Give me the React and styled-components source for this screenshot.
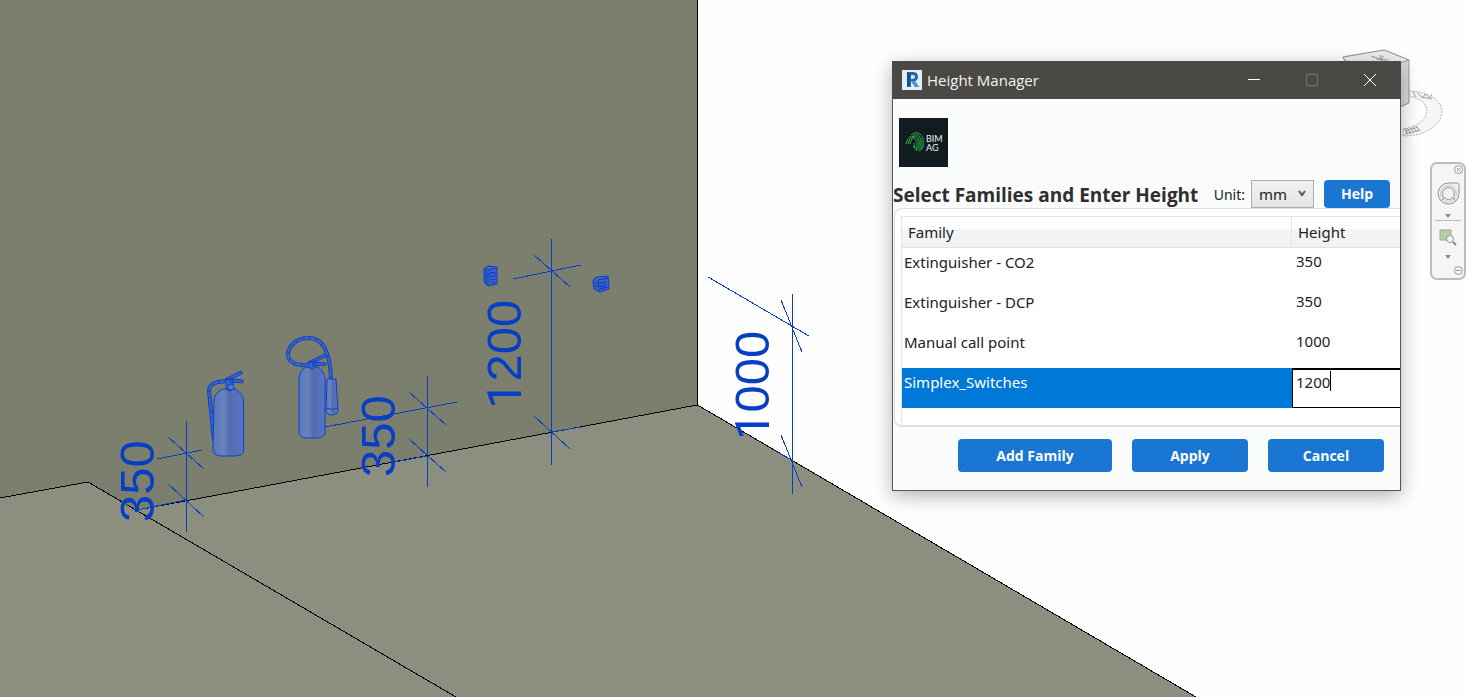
import React from "react";
import styled, { createGlobalStyle, css } from "styled-components";

const GlobalStyle = createGlobalStyle`
  * { box-sizing: border-box; }
  body { margin: 0; background: #fefefe; }
  body, button, input, select { font-family: "Noto Sans", "Open Sans", sans-serif; }
`;

const Workspace = styled.main`
  position: relative;
  min-height: 100vh;
  overflow: hidden;
`;

const Scene = styled.svg`
  position: absolute;
  inset: 0;
  width: 100%;
  height: 100%;
  display: block;
`;

const DimensionText = styled.text`
  font-family: "Liberation Sans", Arial, sans-serif;
  font-size: 49px;
  fill: #053fc4;
`;

const LeadingOne = styled.tspan`
  font-family: Roboto, sans-serif;
`;

const Dialog = styled.section`
  position: absolute;
  top: 61px;
  right: 65px;
  width: 509px;
  display: flex;
  flex-direction: column;
  border: 1px solid #555;
  background: #fafbfb;
  box-shadow: 0 5px 18px rgba(0, 0, 0, 0.3);
`;

const TitleBar = styled.header`
  display: flex;
  align-items: center;
  height: 38px;
  margin: -1px -1px 0;
  padding: 0 2px 0 10px;
  background: #4b4945;
  color: #f3f3f3;
`;

const WindowTitle = styled.h1`
  flex: 1;
  margin: 0 0 0 5px;
  font-family: "Open Sans", sans-serif;
  font-size: 15px;
  line-height: 20px;
  font-weight: 400;
`;

const WindowButton = styled.button`
  width: 58px;
  height: 38px;
  padding: 0;
  border: 0;
  background: transparent;
  color: ${(p) => (p.disabled ? "#75736f" : "#fff")};
  display: grid;
  place-items: center;
`;

const DialogBody = styled.div`
  overflow: hidden;
  padding: 19px 0 18px;
`;

const Brand = styled.svg`
  display: block;
  margin-left: 6px;
`;

const Toolbar = styled.div`
  display: flex;
  align-items: center;
  height: 28px;
  margin-top: 13px;
  padding-right: 10px;
`;

const Heading = styled.h2`
  flex: 1;
  margin: 0;
  font-family: "Open Sans", sans-serif;
  font-size: 19px;
  line-height: 28px;
  padding-top: 1px;
  font-weight: 700;
  white-space: nowrap;
  color: #2e2e2e;
`;

const UnitLabel = styled.label`
  font-size: 14px;
  color: #222;
`;

const UnitPicker = styled.span`
  position: relative;
  margin: 0 10px 0 6px;
  display: flex;
`;

const UnitSelect = styled.select`
  appearance: none;
  width: 63px;
  height: 28px;
  padding: 0 7px;
  border: 1px solid #acacac;
  border-radius: 0;
  background: linear-gradient(#f0f0f0, #e5e5e5);
  font-size: 15px;
  color: #222;
`;

const Chevron = styled.svg`
  position: absolute;
  right: 8px;
  top: 10px;
  pointer-events: none;
`;

const ActionButton = styled.button`
  width: ${(p) => p.$width};
  height: ${(p) => (p.$compact ? "28px" : "33px")};
  padding: 0 0 1px;
  border: 0;
  border-radius: 4px;
  background: #1976d2;
  color: #fff;
  font-family: "Open Sans", sans-serif;
  font-size: 14px;
  font-weight: 700;
`;

const Panel = styled.div`
  height: 219px;
  margin: 0 -12px 0 1px;
  padding: 7px 0 0 6px;
  border: 1px solid #dcdcdc;
  border-bottom: 2px solid #dfdfdf;
  border-radius: 8px;
  background: #fff;
`;

const FamilyTable = styled.table`
  width: 100%;
  height: 209px;
  table-layout: fixed;
  border-collapse: separate;
  border-spacing: 0;
  border: 1px solid #e4e6e8;
  border-width: 1px 0 0 1px;
  font-size: 15px;
  line-height: 20px;
  color: #222;
`;

const HeadCell = styled.th`
  width: ${(p) => p.$width || "auto"};
  height: 31px;
  padding: 0 6px;
  border-right: 1px solid #e4e6e8;
  border-bottom: 1px solid #e0e2e4;
  background: linear-gradient(#fff 40%, #f4f5f6 41%, #f0f1f2);
  text-align: left;
  font-weight: 400;
`;

const Row = styled.tr`
  height: 40px;
  ${(p) =>
    p.$selected &&
    css`
      background: #0078d7;
      color: #fff;
    `}
`;

const Cell = styled.td`
  height: 40px;
  padding: 4px 2px 0;
  vertical-align: top;
  position: relative;
`;

const HeightCell = styled(Cell)`
  padding: ${(p) => (p.$editing ? 0 : "3px 4px 0")};
`;

const HeightInput = styled.input`
  display: block;
  width: 100%;
  height: 40px;
  padding: 0 3px 14px;
  border: 1px solid #000;
  border-top-width: 2px;
  border-radius: 0;
  outline: 0;
  background: #fff;
  color: #222;
  font-size: 15px;
`;

const Caret = styled.span`
  position: absolute;
  left: 38px;
  top: 3px;
  width: 1px;
  height: 20px;
  background: #000;
`;

const Actions = styled.footer`
  display: flex;
  justify-content: flex-end;
  gap: 20px;
  margin-top: 12px;
  padding-right: 16px;
`;

const NavBar = styled.nav`
  position: absolute;
  top: 162px;
  right: 0;
  width: 36px;
  display: flex;
  flex-direction: column;
  align-items: center;
  border: 2px solid #bcbcbc;
  border-radius: 7px;
  background: #f5f5f5;
`;

const NavButton = styled.button`
  width: 100%;
  height: ${(p) => p.$height};
  padding: 0 ${(p) => (p.$corner ? "1px" : "0")} 0 0;
  border: 0;
  background: transparent;
  display: flex;
  align-items: center;
  justify-content: ${(p) => (p.$corner ? "flex-end" : "center")};
`;

const NavRule = styled.hr`
  width: 26px;
  height: 1px;
  margin: 0;
  border: 0;
  background: #bcbcbc;
`;

const families = [
  { name: "Extinguisher - CO2", height: "350" },
  { name: "Extinguisher - DCP", height: "350" },
  { name: "Manual call point", height: "1000" },
  { name: "Simplex_Switches", height: "1200", editing: true },
];

const dimensions = [
  { label: "350", x: 154, y: 522, lines: "M186.5 421V532M157 459L202 450M168 437L204 469M137 510L186 500M168 484L204 517" },
  { label: "350", x: 395, y: 477, lines: "M427.5 376V487M325 427L457 402M409 392L446 425M395 462L427 456M409 439L446 472" },
  { label: "1200", x: 521, y: 409, lines: "M551.5 239V465M513 279L581 265M534 255L570 287M551 432L581 427M534 416L570 449" },
  { label: "1000", x: 769, y: 440, lines: "M792.5 294V494M708 277L809 336M781 300L802 352M777 452L792 460M781 435L802 487" },
];

function Hose({ d }) {
  return (
    <g fill="none">
      <path d={d} stroke="#0a44cc" strokeWidth="4" />
      <path d={d} stroke="#4468b8" strokeWidth="2" />
      <path d={d} stroke="#0a44cc" strokeWidth="2" strokeDasharray="1 6" />
    </g>
  );
}

function Extinguishers() {
  return (
    <g stroke="#0a44cc" strokeWidth="1" strokeLinejoin="round">
      <Hose d="M226 381L218 382Q209 384 209 391L211 411L214 441" />
      <path d="M214 401Q214 393 223 389L235 389Q243 393 243.500 401V451Q243 455 236 456H220Q213 455 213 449Z" fill="url(#tank)" />
      <path d="M226 379L233 378V389L230 391L226 389ZM225 379L241 371L243 373L230 380ZM231 379L243 380V383L230 382Z" fill="#3a62c2" />
      <circle cx="231" cy="387" r="3" fill="#5b7acc" />
      <Hose d="M309 365C296 366 287 362 288 353C290 343 299 338 309 338C322 338 330 350 331 379" />
      <path d="M299 379Q299 371 306 367H318Q324 371 325 379V433Q324 437 318 438H305Q299 437 299 432Z" fill="url(#tank)" />
      <path d="M308 362L315 361V367L312 369L308 367ZM308 362L325 354L327 356L313 363ZM313 362L326 363V365L313 366Z" fill="#3a62c2" />
      <path d="M327 379H336L338 411Q338 414 333 415H330Q327 414 326 411Z" fill="url(#tank)" />
      <path d="M327 408Q332 411 338 408" fill="none" />
    </g>
  );
}

function WallDevices() {
  return (
    <g stroke="#0a3fcb" strokeWidth="1" fill="#3e64bd">
      <path d="M484 269L488 266L497 267V284L488 286L484 282Z" />
      <path d="M488 270L497 268M488 270V285M486 268V284M490 273L495 272V276L490 277ZM490 280L496 279M491 283L496 282M484 274L488 276" fill="none" />
      <path d="M593 280L597 277L608 276L609 289L600 292L594 289Z" />
      <path d="M598 280L608 278M598 280L599 291M600 283L606 282V286L600 287ZM600 289L608 287M594 283H598M594 286H598M603 282V290" fill="none" />
    </g>
  );
}

function ViewCube() {
  return (
    <g fill="none" stroke="#b4b4b4" strokeWidth="1">
      <path d="M1409 91C1430 92 1442 101 1442 112C1441 126 1425 136 1403 136V129C1419 126 1427 119 1427 110C1426 102 1418 98 1409 96Z" fill="#f6f6f6" strokeDasharray="2 1" />
      <path d="M1343 57L1384 50L1409 60L1401 67L1345 61Z" fill="#eeeeee" stroke="#8a8a8a" />
      <path d="M1371 56L1380 59L1384 56M1376 59L1388 60M1380 55L1382 61" stroke="#999" />
      <path d="M1400 63L1409 60V103L1400 107Z" fill="#d8d8d8" stroke="#999" />
      <path d="M1413 92L1416 97M1417 93L1423 98L1425 94L1430 98L1432 94M1421 97L1432 99" stroke="#a5a5a5" />
      <path d="M1404 128L1408 134M1407 128L1411 134M1410 128L1414 133M1413 127L1417 132M1416 126L1420 131M1405 131L1418 127M1405 134L1420 130" stroke="#a0a0a0" />
    </g>
  );
}

function ModelView() {
  return (
    <Scene viewBox="0 0 1466 697" preserveAspectRatio="xMinYMin slice" aria-label="3D view">
      <defs>
        <linearGradient id="tank">
          <stop offset="0" stopColor="#5877bd" />
          <stop offset="0.35" stopColor="#6883bd" />
          <stop offset="0.55" stopColor="#526cad" />
          <stop offset="1" stopColor="#5876c6" />
        </linearGradient>
      </defs>
      <path d="M0 0H697V405L137 510L88 482L0 498Z" fill="#7c7e6e" />
      <path d="M0 498L88 482L137 510L697 405L1196 697H0Z" fill="#8c8e7f" />
      <path d="M697.500 0V405L1196 697M697 405L137 510M0 498L88 482L456 697" fill="none" stroke="#000" shapeRendering="crispEdges" />
      <Extinguishers />
      <WallDevices />
      <ViewCube />
      {dimensions.map((d) => (
        <g key={d.x}>
          <path d={d.lines} fill="none" stroke="#053fc4" shapeRendering="crispEdges" />
          <DimensionText transform={`translate(${d.x} ${d.y}) rotate(-90)`}>
            {d.label[0] === "1" ? (
              <>
                <LeadingOne>1</LeadingOne>
                {d.label.slice(1)}
              </>
            ) : (
              d.label
            )}
          </DimensionText>
        </g>
      ))}
    </Scene>
  );
}

function AppIcon() {
  return (
    <svg width="20" height="20" viewBox="0 0 20 20" aria-hidden="true">
      <path d="M0 0H20V20H0Z" fill="#e7edf5" />
      <path d="M5 2H11Q16 2 16 7Q16 10 13 11L17 17H13L9 11V17H5Z" fill="#2467b1" />
      <path d="M9 5H11Q13 5 13 7Q13 9 9 9Z" fill="#d7e5f5" />
      <path d="M5 2L8 4V15L5 17Z" fill="#194f91" />
      <path d="M9 11L13 11L17 17H13Z" fill="#4e94d6" />
    </svg>
  );
}

function BrandLogo() {
  return (
    <Brand width="49" height="49" viewBox="0 0 49 49" role="img" aria-label="BIM AG">
      <path d="M0 0H49V49H0Z" fill="#121c20" />
      <g fill="none" stroke="#27b34b" strokeWidth="1">
        <path d="M7 26Q8 20 12 18M9 26Q10 21 14 18M11 26Q12 21 15 18" />
        <path d="M12 17Q17 13 21 16Q25 19 24 25V29" />
        <path d="M13 19Q17 15 20 18Q23 21 22 26V31" />
        <path d="M14 20Q17 17 19 20Q21 23 20 27V32" />
        <path d="M15 21Q17 20 18 23Q18 26 18 32" />
        <path d="M15 25L16 30M14 28L18 33M24 29Q23 32 20 33" />
      </g>
      <g fill="#eef3f3" fontFamily="Lato, sans-serif" fontSize="9">
        <text x="27" y="24">BIM</text>
        <text x="27" y="33">AG</text>
      </g>
    </Brand>
  );
}

function DownArrow() {
  return (
    <svg width="6" height="4" viewBox="0 0 6 4" aria-hidden="true">
      <path d="M0 0H6L3 4Z" fill="#8d8d8d" />
    </svg>
  );
}

function NavigationBar() {
  return (
    <NavBar aria-label="Navigation bar">
      <NavButton $height="11px" $corner aria-label="Close">
        <svg width="9" height="9" viewBox="0 0 9 9" fill="none" stroke="#999">
          <circle cx="4.500" cy="4.500" r="4" />
          <path d="M3 3L6 6M6 3L3 6" />
        </svg>
      </NavButton>
      <NavButton $height="36px" aria-label="Steering wheel">
        <svg width="23" height="23" viewBox="0 0 23 23" fill="none" stroke="#929292">
          <path d="M12 1H20Q22 1 22 3V12A10.500 10.500 0 1 1 12 1Z" fill="#f0f0f0" />
          <circle cx="11.500" cy="11.500" r="8" stroke="#c4c4c4" />
          <circle cx="11.500" cy="11.500" r="6" />
          <path d="M7 16L4 19M16 16L19 19" />
        </svg>
      </NavButton>
      <NavButton $height="9px" aria-label="Wheel options"><DownArrow /></NavButton>
      <NavRule />
      <NavButton $height="31px" aria-label="Zoom region">
        <svg width="18" height="18" viewBox="0 0 18 18" fill="none">
          <path d="M1 2H12V12H1Z" fill="#b9cdaa" stroke="#8eae82" />
          <circle cx="11" cy="11" r="3.500" fill="#f5f5f5" stroke="#8d989b" />
          <path d="M14 14L17 17" stroke="#858585" strokeWidth="2" />
        </svg>
      </NavButton>
      <NavButton $height="10px" aria-label="Zoom options"><DownArrow /></NavButton>
      <NavButton $height="16px" $corner aria-label="Customize">
        <svg width="9" height="9" viewBox="0 0 9 9" fill="none" stroke="#999">
          <circle cx="4.500" cy="4.500" r="4" />
          <path d="M2 4.500H7" />
        </svg>
      </NavButton>
    </NavBar>
  );
}

export default function App() {
  return (
    <Workspace>
      <GlobalStyle />
      <ModelView />
      <NavigationBar />
      <Dialog role="dialog" aria-labelledby="window-title">
        <TitleBar>
          <AppIcon />
          <WindowTitle id="window-title">Height Manager</WindowTitle>
          <WindowButton aria-label="Minimize">
            <svg width="12" height="12" stroke="currentColor"><path d="M0 5.500H12" /></svg>
          </WindowButton>
          <WindowButton aria-label="Maximize" disabled>
            <svg width="12" height="12" fill="none" stroke="currentColor"><path d="M.5.5H11.500V11.500H.5Z" /></svg>
          </WindowButton>
          <WindowButton aria-label="Close">
            <svg width="12" height="12" stroke="currentColor"><path d="M0 0L12 12M12 0L0 12" /></svg>
          </WindowButton>
        </TitleBar>
        <DialogBody>
          <BrandLogo />
          <Toolbar>
            <Heading>Select Families and Enter Height</Heading>
            <UnitLabel htmlFor="unit">Unit:</UnitLabel>
            <UnitPicker>
              <UnitSelect id="unit" defaultValue="mm">
                <option>mm</option>
              </UnitSelect>
              <Chevron width="8" height="8" viewBox="0 0 8 8" fill="none" stroke="#555" strokeWidth="2">
                <path d="M1 1L4 5L7 1" />
              </Chevron>
            </UnitPicker>
            <ActionButton $width="66px" $compact>Help</ActionButton>
          </Toolbar>
          <Panel>
            <FamilyTable>
              <thead>
                <tr>
                  <HeadCell $width="390px">Family</HeadCell>
                  <HeadCell>Height</HeadCell>
                </tr>
              </thead>
              <tbody>
                {families.map((f) => (
                  <Row key={f.name} $selected={f.editing}>
                    <Cell>{f.name}</Cell>
                    <HeightCell $editing={f.editing}>
                      {f.editing ? (
                        <>
                          <HeightInput aria-label={`Height of ${f.name}`} defaultValue={f.height} />
                          <Caret />
                        </>
                      ) : (
                        f.height
                      )}
                    </HeightCell>
                  </Row>
                ))}
                <tr><td colSpan="2" /></tr>
              </tbody>
            </FamilyTable>
          </Panel>
          <Actions>
            <ActionButton $width="154px">Add Family</ActionButton>
            <ActionButton $width="116px">Apply</ActionButton>
            <ActionButton $width="116px">Cancel</ActionButton>
          </Actions>
        </DialogBody>
      </Dialog>
    </Workspace>
  );
}
